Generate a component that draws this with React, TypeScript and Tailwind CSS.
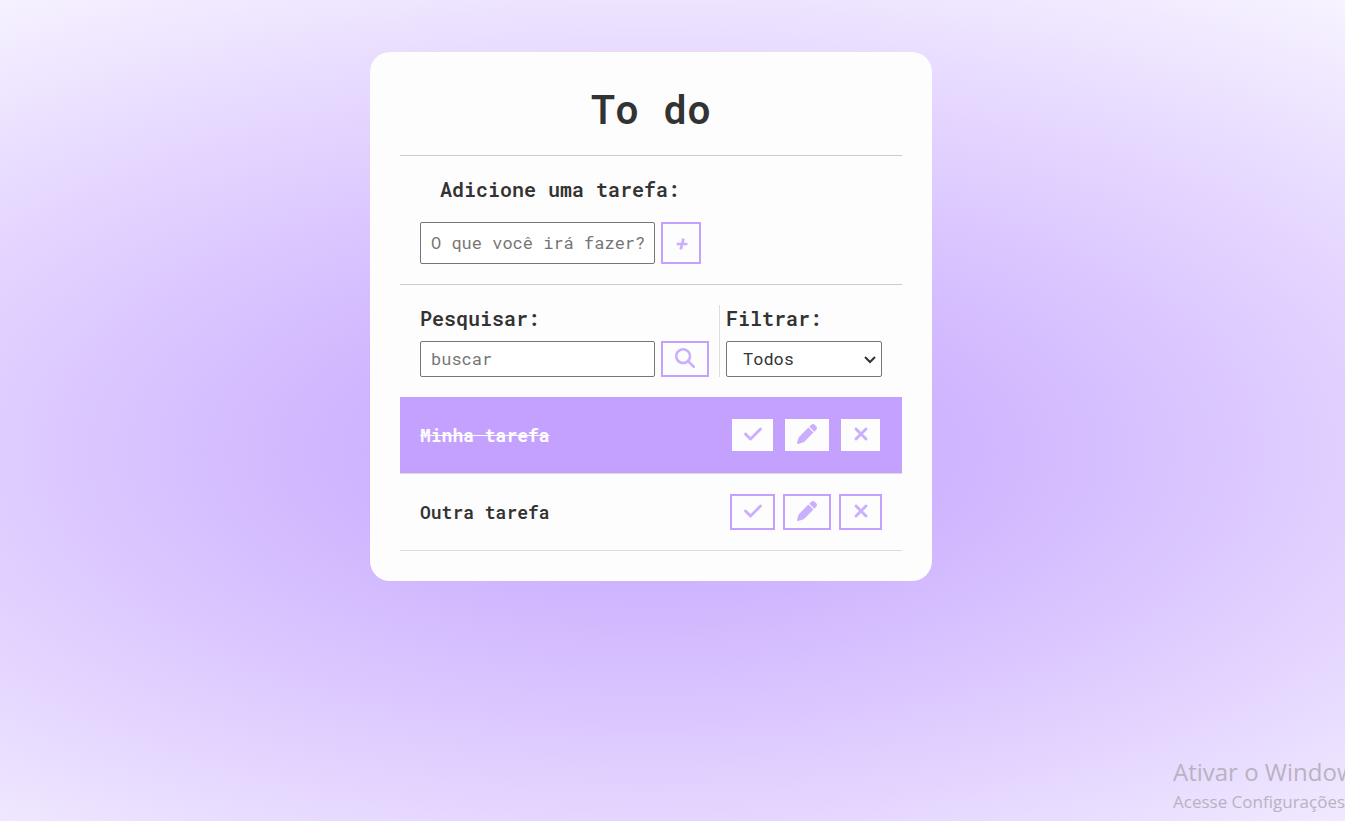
import { useState } from "react";
import type { ReactNode } from "react";
import { FaCheck, FaMagnifyingGlass, FaPen, FaXmark } from "react-icons/fa6";

interface Task {
  id: number;
  title: string;
  done: boolean;
}

const initialTasks: Task[] = [
  { id: 1, title: "Minha tarefa", done: true },
  { id: 2, title: "Outra tarefa", done: false },
];

const buttonWidths = {
  small: "w-[43px]",
  medium: "w-[45px]",
  large: "w-12",
};

interface IconButtonProps {
  label: string;
  size: keyof typeof buttonWidths;
  onClick?: () => void;
  children: ReactNode;
}

function IconButton({ label, size, onClick, children }: IconButtonProps) {
  return (
    <button
      type="button"
      aria-label={label}
      onClick={onClick}
      className={`${buttonWidths[size]} flex h-9 cursor-pointer items-center justify-center border-2 border-[#c4a1ff] bg-[#fdfdfd] pb-0.5 text-[#cbafff]`}
    >
      {children}
    </button>
  );
}

function TaskRow({ task, onToggle, onRemove }: { task: Task; onToggle: () => void; onRemove: () => void }) {
  return (
    <li
      className={
        task.done
          ? "flex items-center justify-between border-b border-[#dddddd] bg-[#c4a1ff] p-5 text-[#fdfdfd]"
          : "flex items-center justify-between border-b border-[#dddddd] p-5"
      }
    >
      <h3 className={task.done ? "text-[18px] leading-6 font-bold line-through" : "text-[18px] leading-6 font-semibold"}>
        {task.title}
      </h3>
      <div className="flex gap-2">
        <IconButton label="Concluir" size="medium" onClick={onToggle}>
          <FaCheck className="h-5 w-[18px]" stroke="currentColor" strokeWidth="10" />
        </IconButton>
        <IconButton label="Editar" size="large">
          <FaPen className="size-5" />
        </IconButton>
        <IconButton label="Remover" size="small" onClick={onRemove}>
          <FaXmark className="h-5 w-4" stroke="currentColor" strokeWidth="10" />
        </IconButton>
      </div>
    </li>
  );
}

export default function App() {
  const [tasks, setTasks] = useState(initialTasks);
  const toggle = (id: number) => setTasks(tasks.map((t) => (t.id === id ? { ...t, done: !t.done } : t)));
  const remove = (id: number) => setTasks(tasks.filter((t) => t.id !== id));

  return (
    <div className="relative min-h-screen overflow-hidden bg-[radial-gradient(95%_72%_at_48.4%_55%,#c2a0ff_0%,#e4d5ff_61%,#fdfdff_104%)] pt-[52px] pr-[43px] pb-12 font-['Roboto_Mono','Liberation_Mono',monospace] text-[#333333]">
      <main className="mx-auto max-w-[562px] rounded-[20px] bg-[#fdfdfd] p-[30px]">
        <header className="border-b border-[#cccccc] pb-5 text-center">
          <h1 className="text-[40px] leading-[53px] font-semibold">To do</h1>
        </header>

        <form className="border-b border-[#cccccc] p-5" onSubmit={(e) => e.preventDefault()}>
          <label htmlFor="new-task" className="mb-5 block pl-5 text-[20px] leading-[26px] font-semibold">
            Adicione uma tarefa:
          </label>
          <div className="flex gap-1.5">
            <input
              id="new-task"
              type="text"
              placeholder="O que você irá fazer?"
              className="h-[42px] w-[235px] rounded-[2px] border border-[#767676] bg-white px-2.5 pb-0.5 text-[17px] placeholder:text-[#757575]"
            />
            <button
              type="submit"
              aria-label="Adicionar"
              className="flex h-[42px] w-10 cursor-pointer items-center justify-center border-2 border-[#c4a1ff] pt-0.5 pl-0.5 text-[#cbafff]"
            >
              <svg viewBox="0 0 12 12" className="size-3" fill="none" stroke="currentColor" strokeWidth="2.7">
                <path d="M0.6 6H11.4M7.5 0.6L4.7 11.4" />
              </svg>
            </button>
          </div>
        </form>

        <div className="flex justify-between p-5">
          <form className="border-r border-[#dddddd] pr-2.5" onSubmit={(e) => e.preventDefault()}>
            <label htmlFor="search" className="mb-2.5 block text-[20px] leading-[26px] font-semibold">
              Pesquisar:
            </label>
            <div className="flex gap-1.5">
              <input
                id="search"
                type="text"
                placeholder="buscar"
                className="h-9 w-[235px] rounded-[2px] border border-[#767676] bg-white px-2.5 pb-0.5 text-[17px] placeholder:text-[#757575]"
              />
              <IconButton label="Buscar" size="large">
                <FaMagnifyingGlass className="size-5" />
              </IconButton>
            </div>
          </form>
          <div>
            <label htmlFor="filter" className="mb-2.5 block text-[20px] leading-[26px] font-semibold">
              Filtrar:
            </label>
            <div className="relative">
              <select
                id="filter"
                className="block h-9 w-[156px] appearance-none rounded-[2px] border border-[#767676] bg-white px-4 text-[17px]"
              >
                <option>Todos</option>
                <option>Feitos</option>
                <option>A fazer</option>
              </select>
              <svg
                viewBox="0 0 12 8"
                className="pointer-events-none absolute top-[15px] right-1.5 h-2 w-3"
                fill="none"
                stroke="currentColor"
                strokeWidth="2"
              >
                <path d="M1 1L6 6L11 1" />
              </svg>
            </div>
          </div>
        </div>

        <ul>
          {tasks.map((task) => (
            <TaskRow key={task.id} task={task} onToggle={() => toggle(task.id)} onRemove={() => remove(task.id)} />
          ))}
        </ul>
      </main>

      <aside className="absolute right-0 bottom-[5px] w-[172px] overflow-hidden font-['Open_Sans',sans-serif] whitespace-nowrap text-[#b8b3c0]">
        <p className="text-[24px] leading-8">Ativar o Windows</p>
        <p className="text-[17px] leading-7">Acesse Configurações</p>
      </aside>
    </div>
  );
}
